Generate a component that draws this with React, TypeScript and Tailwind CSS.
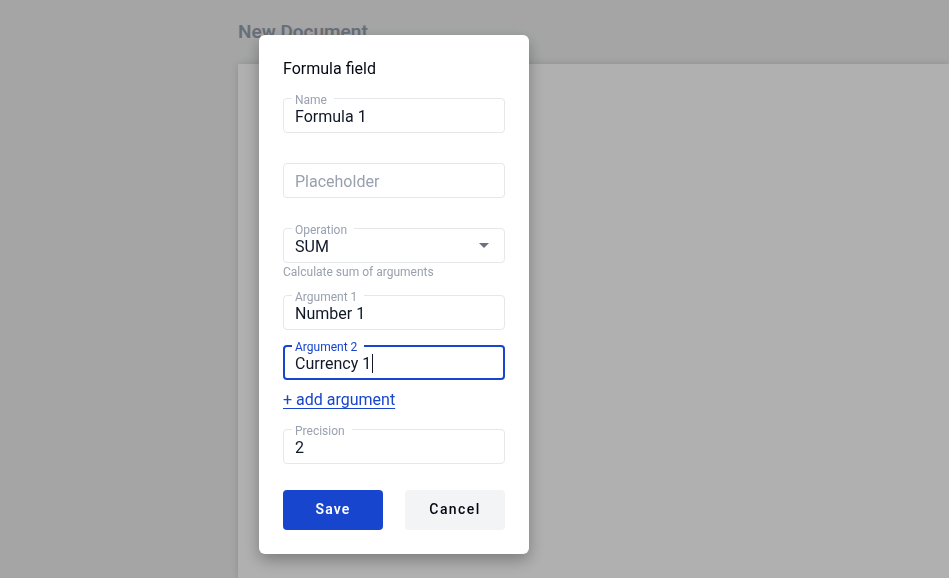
import type { ReactNode } from 'react';

const font = { fontFamily: 'Roboto, "Liberation Sans", sans-serif' };

function Outlined({
  label,
  focused = false,
  children,
  className = '',
}: {
  label?: string;
  focused?: boolean;
  children: ReactNode;
  className?: string;
}) {
  return (
    <div className={`relative ${className}`}>
      <div
        className={`flex h-[35px] items-center rounded-[4px] bg-white pt-[2px] ${
          focused ? 'border-2 border-[#1745cd] pl-[10px]' : 'border border-gray-200 pl-[11px]'
        } pr-3`}
      >
        {children}
      </div>
      {label && (
        <span
          className={`absolute -top-[6px] left-[9px] bg-white pl-[3px] pr-[7px] text-[12px] leading-4 ${
            focused ? 'text-[#1745cd]' : 'text-gray-400'
          }`}
        >
          {label}
        </span>
      )}
    </div>
  );
}

export default function App() {
  return (
    <div className="relative min-h-screen overflow-hidden bg-[#eff0f0]" style={font}>
      {/* Page behind the dialog */}
      <div className="flex min-h-screen flex-col pl-[238px] pt-[20px]">
        <h1 className="text-[19px] font-semibold leading-6 text-gray-400">New Document</h1>
        <div className="mt-[20px] flex-1 bg-white shadow-[0_0_8px_rgba(0,0,0,0.15)]" />
      </div>

      {/* Overlay */}
      <div className="fixed inset-0 bg-black/[0.31]">
        <div className="pl-[259px] pt-[35px]">
          <div className="w-[270px] rounded-[6px] bg-white px-6 pb-6 pt-6 shadow-[0_6px_16px_rgba(0,0,0,0.3)]">
            <h2 className="text-[16px] font-normal leading-5 text-gray-950">Formula field</h2>

            <Outlined label="Name" className="mt-[19px]">
              <span className="text-[16px] text-gray-900">Formula 1</span>
            </Outlined>

            <Outlined className="mt-[30px]">
              <span className="text-[16px] text-gray-400">Placeholder</span>
            </Outlined>

            <Outlined label="Operation" className="mt-[30px]">
              <span className="flex-1 text-[16px] text-gray-900">SUM</span>
              <span className="mr-[3px] -mt-[2px] h-0 w-0 border-x-[5px] border-t-[5px] border-x-transparent border-t-gray-500" />
            </Outlined>
            <p className="mt-px text-[12px] leading-4 text-gray-400">Calculate sum of arguments</p>

            <Outlined label="Argument 1" className="mt-[15px]">
              <span className="text-[16px] text-gray-900">Number 1</span>
            </Outlined>

            <Outlined label="Argument 2" focused className="mt-[15px]">
              <span className="text-[16px] text-gray-900">Currency 1</span>
              <span className="ml-[1px] h-[19px] w-px bg-gray-900" />
            </Outlined>

            <div className="mt-[8px] leading-6">
              <a href="#" className="text-[16px] text-[#1745cd] underline underline-offset-[3px]">
                + add argument
              </a>
            </div>

            <Outlined label="Precision" className="mt-[17px]">
              <span className="text-[16px] text-gray-900">2</span>
            </Outlined>

            <div className="mt-[26px] flex justify-between">
              <button className="h-10 w-[100px] rounded-[4px] bg-[#1745cd] pb-[2px] text-[14px] font-semibold tracking-[0.08em] text-white">
                Save
              </button>
              <button className="h-10 w-[100px] rounded-[4px] bg-gray-100 pb-[2px] text-[14px] font-medium tracking-[0.1em] text-gray-950">
                Cancel
              </button>
            </div>
          </div>
        </div>
      </div>
    </div>
  );
}
